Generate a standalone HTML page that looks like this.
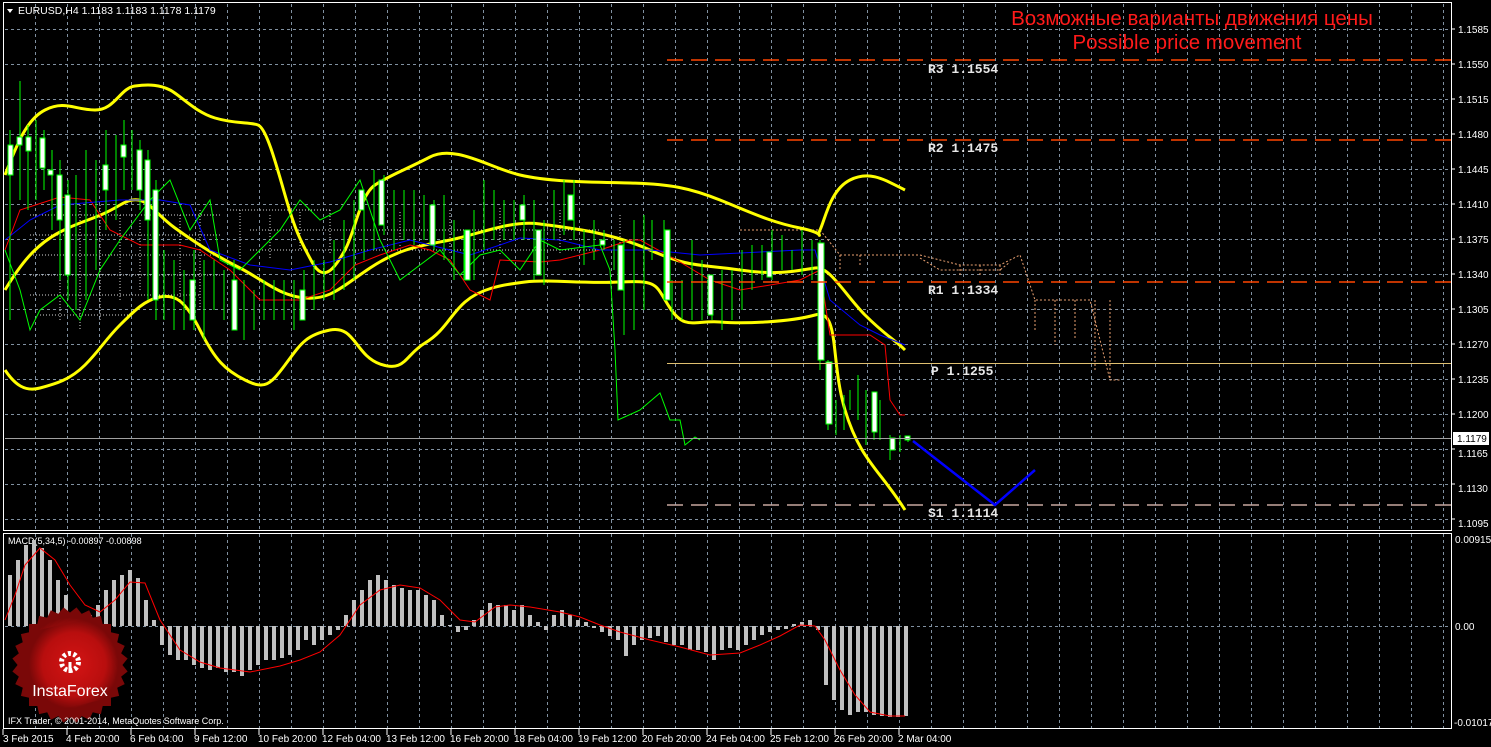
<!DOCTYPE html>
<html><head><meta charset="utf-8"><style>
html,body{margin:0;padding:0;background:#000;width:1491px;height:747px;overflow:hidden}
svg{display:block}
</style></head><body>
<svg width="1491" height="747" viewBox="0 0 1491 747" xmlns="http://www.w3.org/2000/svg" font-family="Liberation Sans, sans-serif">
<rect width="1491" height="747" fill="#000"/>
<!-- grid -->
<g stroke="#8090a0" stroke-width="1" stroke-dasharray="3,3" shape-rendering="crispEdges" fill="none">
<path d="M5 29.5H1451M5 64.5H1451M5 99.5H1451M5 134.5H1451M5 169.5H1451M5 204.5H1451M5 239.5H1451M5 274.5H1451M5 309.5H1451M5 344.5H1451M5 379.5H1451M5 414.5H1451M5 449.5H1451M5 484.5H1451M5 519.5H1451M5 626.5H1451"/>
<path d="M35.5 4V530M67.5 4V530M99.5 4V530M131.5 4V530M163.5 4V530M195.5 4V530M227.5 4V530M259.5 4V530M291.5 4V530M323.5 4V530M355.5 4V530M387.5 4V530M419.5 4V530M451.5 4V530M483.5 4V530M515.5 4V530M547.5 4V530M579.5 4V530M611.5 4V530M643.5 4V530M675.5 4V530M707.5 4V530M739.5 4V530M771.5 4V530M803.5 4V530M835.5 4V530M867.5 4V530M899.5 4V530M931.5 4V530M963.5 4V530M995.5 4V530M1027.5 4V530M1059.5 4V530M1091.5 4V530M1123.5 4V530M1155.5 4V530M1187.5 4V530M1219.5 4V530M1251.5 4V530M1283.5 4V530M1315.5 4V530M1347.5 4V530M1379.5 4V530M1411.5 4V530M1443.5 4V530"/>
<path d="M35.5 534V728M67.5 534V728M99.5 534V728M131.5 534V728M163.5 534V728M195.5 534V728M227.5 534V728M259.5 534V728M291.5 534V728M323.5 534V728M355.5 534V728M387.5 534V728M419.5 534V728M451.5 534V728M483.5 534V728M515.5 534V728M547.5 534V728M579.5 534V728M611.5 534V728M643.5 534V728M675.5 534V728M707.5 534V728M739.5 534V728M771.5 534V728M803.5 534V728M835.5 534V728M867.5 534V728M899.5 534V728M931.5 534V728M963.5 534V728M995.5 534V728M1027.5 534V728M1059.5 534V728M1091.5 534V728M1123.5 534V728M1155.5 534V728M1187.5 534V728M1219.5 534V728M1251.5 534V728M1283.5 534V728M1315.5 534V728M1347.5 534V728M1379.5 534V728M1411.5 534V728M1443.5 534V728"/>
</g>
<!-- frames -->
<rect x="3.5" y="2.5" width="1448" height="528" fill="none" stroke="#fff"/>
<rect x="3.5" y="533.5" width="1448" height="195" fill="none" stroke="#fff"/>
<!-- cloud dotted -->
<g stroke="#d8d8d8" stroke-width="1" stroke-dasharray="1,2" fill="none">
<path d="M30 215H220M30 235H220M30 255H220M30 275H220M30 295H200M40 315H130M230 210H330M250 230H600M250 250H650"/>
<path d="M60 205V320M80 205V330M100 205V320M120 215V300M140 220V290M180 215V300M200 210V310M240 210V260M270 215V260M300 212V250M330 210V255M400 212V250M450 210V255M500 208V255M560 210V255M620 215V255"/>
</g>
<g stroke="#e8a070" stroke-width="1" stroke-dasharray="2,2" fill="none">
<path d="M740 230H820L840 255L920 255L960 265L1000 265L1020 255L1035 300L1090 300L1110 380L1120 380"/>
<path d="M920 258L940 270L1000 270L1010 262M1035 300V330M1055 300V345M1075 300V340M1095 300V370M1110 300V380M840 255V270M860 255V265M960 265V275M980 265V275M1000 265V275"/>
</g>
<!-- bollinger -->
<g fill="none" stroke="#ffff00" stroke-width="3" stroke-linejoin="round">
<path d="M5 175C15 150 25 120 45 110S75 110 95 110S120 88 135 86S160 85 170 90S195 112 215 118S250 122 258 125S275 160 285 195S300 240 312 262S335 268 345 250S360 195 375 185S405 170 430 157S490 168 520 175S590 182 630 183S690 188 720 200S770 222 800 228S815 240 820 230S830 190 850 180S885 180 905 190"/>
<path d="M5 370C15 385 25 392 40 388S70 380 85 365S105 340 120 325S145 300 160 297S185 300 200 330S225 370 245 380S270 385 285 365S305 335 330 330S355 355 380 364S405 355 425 343S450 315 465 302S500 285 525 282S580 284 620 282S655 285 670 308S695 320 720 322S790 322 815 315S830 360 845 410S880 470 905 510"/>
<path d="M5 290C20 265 35 245 60 232S95 220 120 205S150 210 175 228S215 255 240 268S280 296 305 298S340 288 370 268S420 246 450 240S510 220 540 224S610 232 650 250S700 264 740 270S800 270 815 268S845 295 865 315S895 340 905 350"/>
</g>
<!-- red / blue / green lines -->
<polyline fill="none" stroke="#ff0000" stroke-width="1" points="5,250 20,210 60,197 90,200 110,230 140,245 180,245 200,250 230,270 260,300 300,300 330,290 355,265 380,255 410,245 430,250 450,260 470,290 490,300 500,260 540,262 560,260 600,250 630,240 640,240 680,262 710,280 740,290 800,280 820,270 830,335 870,335 885,345 890,400 900,415 905,415"/>
<polyline fill="none" stroke="#0000ff" stroke-width="1" points="5,240 30,220 60,205 120,200 160,200 190,205 210,250 250,265 290,270 330,262 370,250 410,240 450,250 470,255 500,245 520,238 560,240 600,250 650,250 700,255 800,250 815,250 830,300 860,325 880,335 905,345"/>
<polyline fill="none" stroke="#00ff00" stroke-width="1" points="5,250 20,290 30,330 40,310 60,295 80,320 100,270 120,240 150,200 170,180 190,230 210,200 220,260 240,270 260,250 280,230 300,200 320,220 340,210 360,180 380,240 400,280 420,265 440,250 460,275 480,255 500,250 520,270 540,240 560,250 600,245 610,270 615,350 618,420 640,410 660,393 670,420 680,420 685,445 695,437 700,440"/>
<!-- candles wicks -->
<g stroke="#00ff00" stroke-width="1">
<path d="M10 130V320M20 81V200M28 125V210M36 120V200M44 130V190M52 150V230M60 160V280M68 180V300M76 175V310M86 150V300M96 160V270M106 130V230M116 135V220M124 120V190M132 130V190M140 140V210M148 150V300M156 180V320M164 250V320M174 260V330M184 270V330M194 250V330M204 260V340M214 260V310M224 270V320M234 260V330M244 280V340M254 290V330M264 280V320M274 280V320M284 280V320M294 280V330M304 270V320M314 260V310M324 260V300M334 240V300M344 220V290M354 200V280M364 190V260M374 170V250M384 175V235M394 190V250M404 190V240M414 190V245M424 195V240M434 200V250M444 195V260M454 220V280M464 230V280M474 210V280M484 180V250M494 190V240M504 200V240M514 200V240M524 195V240M534 200V280M544 220V285M554 190V240M564 180V235M574 180V240M584 230V265M594 220V260M604 230V250M614 240V270M624 240V335M634 220V330M644 215V310M652 220V260M664 220V300M672 280V320M682 280V320M692 240V320M702 260V320M712 280V320M722 270V330M732 270V320M742 250V310M752 245V290M762 245V280M772 230V280M782 235V270M792 250V270M802 230V275M812 240V280M820 240V370M828 360V430M836 400V435M844 395V430M850 390V410M858 375V420M866 390V445M874 410V440M880 400V440M890 435V460M900 435V452M908 436V442"/>
</g>
<g fill="#fff" stroke="#00ff00" stroke-width="1">
<rect x="8" y="145" width="5" height="30"/><rect x="17" y="137" width="5" height="8"/><rect x="26" y="137" width="5" height="14"/><rect x="40" y="138" width="5" height="30"/><rect x="48" y="170" width="5" height="5"/><rect x="57" y="175" width="5" height="45"/><rect x="65" y="195" width="5" height="80"/><rect x="103" y="165" width="5" height="25"/><rect x="121" y="145" width="5" height="12"/><rect x="137" y="150" width="5" height="40"/><rect x="145" y="160" width="5" height="60"/><rect x="153" y="190" width="5" height="110"/><rect x="190" y="280" width="5" height="40"/><rect x="232" y="280" width="5" height="50"/><rect x="300" y="290" width="5" height="30"/><rect x="359" y="190" width="5" height="20"/><rect x="379" y="180" width="5" height="45"/><rect x="430" y="205" width="5" height="40"/><rect x="465" y="230" width="5" height="50"/><rect x="520" y="205" width="5" height="15"/><rect x="536" y="230" width="5" height="45"/><rect x="568" y="195" width="5" height="25"/><rect x="600" y="240" width="5" height="5"/><rect x="618" y="245" width="5" height="45"/><rect x="665" y="230" width="5" height="70"/><rect x="708" y="275" width="5" height="40"/><rect x="767" y="252" width="5" height="25"/><rect x="818" y="243" width="6" height="117"/><rect x="826" y="362" width="6" height="62"/><rect x="872" y="392" width="5" height="40"/><rect x="890" y="438" width="5" height="12"/><rect x="905" y="436" width="5" height="4"/>
</g>
<!-- levels -->
<g stroke-width="1.5" stroke-dasharray="16,8" fill="none">
<path d="M667 60H1451" stroke="#ff4500"/>
<path d="M667 140H1451" stroke="#ff4500"/>
<path d="M667 282H1451" stroke="#ff4500"/>
<path d="M667 505H1451" stroke="#c8a8a0"/>
</g>
<path d="M667 363.5H1451" stroke="#e0c070" stroke-width="1"/>
<path d="M5 438.5H1451" stroke="#a0a0a0" stroke-width="1"/>
<polyline points="913,441 995,505 1035,470" fill="none" stroke="#0000ff" stroke-width="2.5"/>
<g font-family="Liberation Mono, monospace" font-weight="bold" font-size="13" fill="#e8e8e8">
<text x="928" y="73">R3 1.1554</text><text x="928" y="152">R2 1.1475</text><text x="928" y="294">R1 1.1334</text><text x="931" y="375">P 1.1255</text><text x="928" y="517">S1 1.1114</text>
</g>
<text x="1192" y="25" font-size="20.5" fill="#ff1a1a" text-anchor="middle">Возможные варианты движения цены</text>
<text x="1187" y="49" font-size="20.5" fill="#ff1a1a" text-anchor="middle">Possible price movement</text>
<!-- header -->
<path d="M7 9H13L10 13Z" fill="#fff"/>
<text x="18" y="14" font-size="10.5" fill="#fff">EURUSD,H4  1.1183 1.1183 1.1178 1.1179</text>
<!-- price axis -->
<g font-size="10" fill="#fff">
<text x="1458" y="33">1.1585</text><text x="1458" y="68">1.1550</text><text x="1458" y="103">1.1515</text><text x="1458" y="138">1.1480</text><text x="1458" y="173">1.1445</text><text x="1458" y="208">1.1410</text><text x="1458" y="243">1.1375</text><text x="1458" y="278">1.1340</text><text x="1458" y="313">1.1305</text><text x="1458" y="348">1.1270</text><text x="1458" y="383">1.1235</text><text x="1458" y="418">1.1200</text><text x="1458" y="457">1.1165</text><text x="1458" y="492">1.1130</text><text x="1458" y="527">1.1095</text>
<text x="1455" y="543">0.00915</text><text x="1455" y="630">0.00</text><text x="1454" y="726">-0.01017</text>
</g>
<g stroke="#fff"><path d="M1451 29H1455M1451 64H1455M1451 99H1455M1451 134H1455M1451 169H1455M1451 204H1455M1451 239H1455M1451 274H1455M1451 309H1455M1451 344H1455M1451 379H1455M1451 414H1455M1451 449H1455M1451 484H1455M1451 519H1455"/></g>
<rect x="1453" y="432" width="36" height="13" fill="#fff"/>
<text x="1457" y="442" font-size="10" fill="#000">1.1179</text>
<!-- MACD -->
<text x="8" y="544" font-size="9" fill="#fff">MACD(5,34,5) -0.00897 -0.00898</text>
<g stroke="#c0c0c0" stroke-width="4">
<path d="M10 626V575M18 626V560M26 626V545M34 626V540M42 626V548M50 626V560M58 626V580M66 626V595M74 626V612M82 626V620M90 626V615M98 626V605M106 626V590M114 626V580M122 626V575M130 626V570M138 626V578M146 626V600M154 626V620M162 626V645M170 626V655M178 626V660M186 626V660M194 626V665M202 626V668M210 626V670M218 626V668M226 626V672M234 626V672M242 626V676M250 626V670M258 626V665M266 626V660M274 626V660M282 626V658M290 626V655M298 626V650M306 626V640M314 626V645M322 626V640M330 626V635M338 626V630M346 626V615M354 626V600M362 626V590M370 626V580M378 626V575M386 626V580M394 626V585M402 626V588M410 626V590M418 626V590M426 626V595M434 626V600M442 626V615M450 626V625M458 626V632M466 626V630M474 626V620M482 626V610M490 626V603M498 626V605M506 626V605M514 626V610M522 626V605M530 626V615M538 626V622M546 626V630M554 626V615M562 626V610M570 626V615M578 626V620M586 626V622M594 626V628M602 626V632M610 626V636M618 626V640M626 626V656M634 626V645M642 626V640M650 626V638M658 626V636M666 626V642M674 626V645M682 626V645M690 626V650M698 626V650M706 626V652M714 626V660M722 626V650M730 626V648M738 626V650M746 626V645M754 626V640M762 626V635M770 626V632M778 626V630M786 626V629M794 626V624M802 626V622M810 626V620M818 626V630M826 626V685M834 626V700M842 626V710M850 626V715M858 626V712M866 626V712M874 626V715M882 626V716M890 626V717M898 626V717M906 626V716"/>
</g>
<polyline fill="none" stroke="#ff0000" stroke-width="1" points="5,620 15,595 25,565 40,548 55,560 70,585 85,605 100,612 115,600 130,582 145,583 160,620 180,650 200,662 220,668 250,672 280,666 300,660 320,652 340,635 360,605 380,590 400,585 420,588 440,600 460,620 475,622 495,607 510,605 530,607 560,612 580,617 600,625 620,632 650,640 680,647 710,655 740,653 760,645 780,636 800,625 815,626 825,640 840,670 855,695 870,712 890,716 905,716"/>
<!-- logo -->
<defs><radialGradient id="lg" cx="0.5" cy="0.45" r="0.55"><stop offset="0" stop-color="#d41414"/><stop offset="0.7" stop-color="#b80e0e"/><stop offset="1" stop-color="#7a0808"/></radialGradient></defs>
<g fill="url(#lg)">
<rect x="29" y="624" width="82" height="82"/>
<rect x="29" y="624" width="82" height="82" transform="rotate(12.86 70 665)"/>
<rect x="29" y="624" width="82" height="82" transform="rotate(25.71 70 665)"/>
<rect x="29" y="624" width="82" height="82" transform="rotate(38.57 70 665)"/>
<rect x="29" y="624" width="82" height="82" transform="rotate(51.43 70 665)"/>
<rect x="29" y="624" width="82" height="82" transform="rotate(64.29 70 665)"/>
<rect x="29" y="624" width="82" height="82" transform="rotate(77.14 70 665)"/>
</g>
<circle cx="70" cy="662" r="8.5" fill="none" stroke="#fff" stroke-width="5" stroke-dasharray="3,2.4"/>
<circle cx="70" cy="662" r="3.5" fill="#c01010"/>
<path d="M70 662V673" stroke="#fff" stroke-width="3"/>
<text x="70" y="696" font-size="16" fill="#fff" text-anchor="middle">InstaForex</text>
<text x="8" y="724" font-size="9" fill="#fff">IFX Trader, © 2001-2014, MetaQuotes Software Corp.</text>
<!-- time axis -->
<g stroke="#fff"><path d="M3 729V735M67 729V735M131 729V735M195 729V735M259 729V735M323 729V735M387 729V735M451 729V735M515 729V735M579 729V735M643 729V735M707 729V735M771 729V735M835 729V735M899 729V735"/></g>
<g font-size="10" fill="#fff">
<text x="3" y="742">3 Feb 2015</text><text x="66" y="742">4 Feb 20:00</text><text x="130" y="742">6 Feb 04:00</text><text x="194" y="742">9 Feb 12:00</text><text x="258" y="742">10 Feb 20:00</text><text x="322" y="742">12 Feb 04:00</text><text x="386" y="742">13 Feb 12:00</text><text x="450" y="742">16 Feb 20:00</text><text x="514" y="742">18 Feb 04:00</text><text x="578" y="742">19 Feb 12:00</text><text x="642" y="742">20 Feb 20:00</text><text x="706" y="742">24 Feb 04:00</text><text x="770" y="742">25 Feb 12:00</text><text x="834" y="742">26 Feb 20:00</text><text x="898" y="742">2 Mar 04:00</text>
</g>
</svg>
</body></html>
